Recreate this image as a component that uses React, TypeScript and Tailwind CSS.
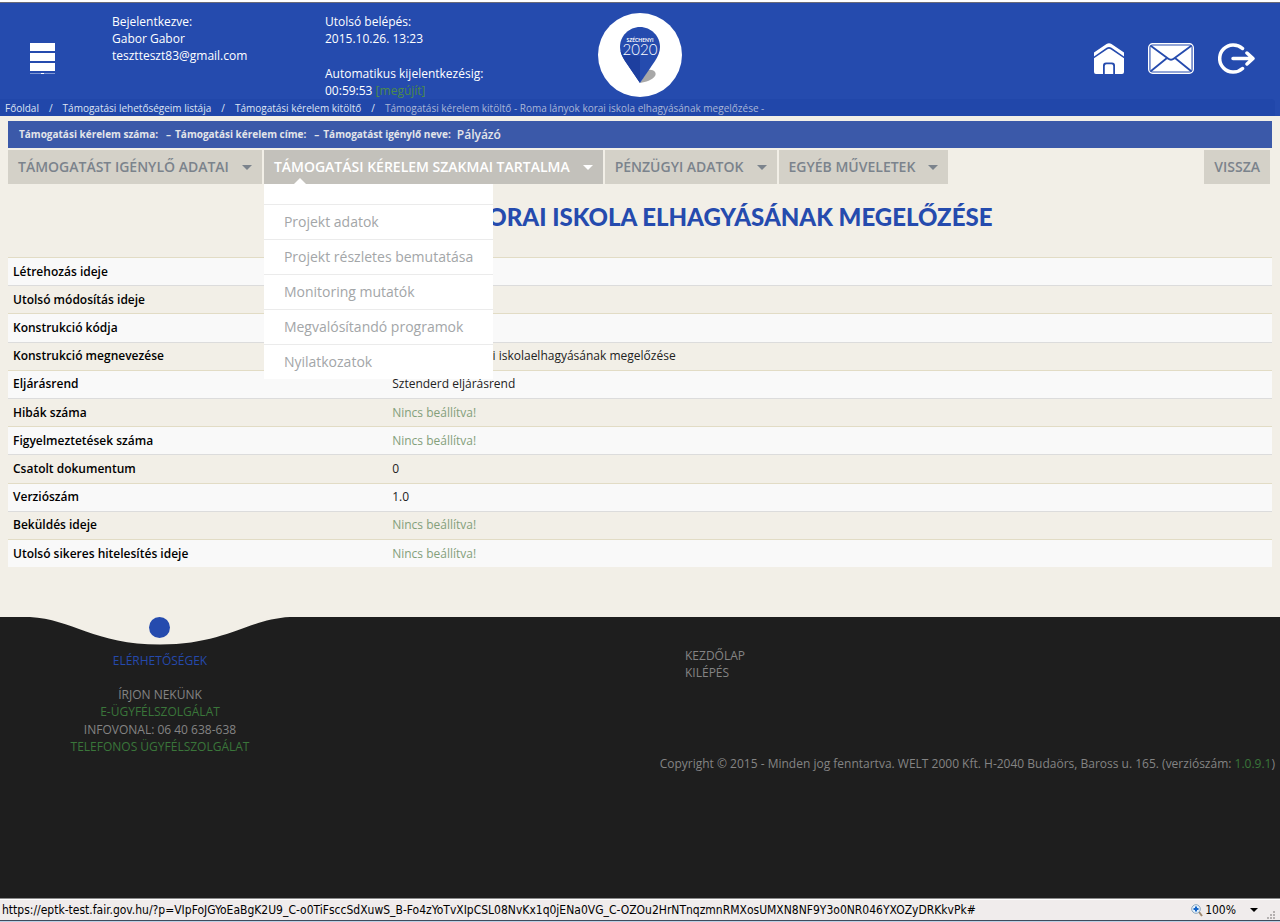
const breadcrumbs = [
  "Főoldal",
  "Támogatási lehetőségeim listája",
  "Támogatási kérelem kitöltő",
];

const submenu = [
  "Projekt adatok",
  "Projekt részletes bemutatása",
  "Monitoring mutatók",
  "Megvalósítandó programok",
  "Nyilatkozatok",
];

const EMPTY = "Nincs beállítva!";

const rows = [
  { label: "Létrehozás ideje", value: "" },
  { label: "Utolsó módosítás ideje", value: "" },
  { label: "Konstrukció kódja", value: "" },
  {
    label: "Konstrukció megnevezése",
    value: "Roma lányok korai iskolaelhagyásának megelőzése",
  },
  { label: "Eljárásrend", value: "Sztenderd eljárásrend" },
  { label: "Hibák száma", value: EMPTY },
  { label: "Figyelmeztetések száma", value: EMPTY },
  { label: "Csatolt dokumentum", value: "0" },
  { label: "Verziószám", value: "1.0" },
  { label: "Beküldés ideje", value: EMPTY },
  { label: "Utolsó sikeres hitelesítés ideje", value: EMPTY },
];

function Logo() {
  return (
    <svg viewBox="0 0 84 84" className="size-[84px]" role="img" aria-label="Széchenyi 2020">
      <circle cx="42" cy="42" r="42" fill="#fff" />
      <path d="M42 70L50 57C56 56 59 60 57 63C54 67 48 69 42 70Z" fill="#a8a8a8" />
      <path d="M42 14C53 14 62 23 62 34C62 39 60 43 57 48L42 70L27 48C24 43 22 39 22 34C22 23 31 14 42 14Z" fill="#254bae" />
      <path d="M42 43V70L27 48C25 45 23 41 22.500 38C28 42 35 43 42 43Z" fill="#1d3f9f" />
      <text x="42" y="29" textAnchor="middle" fill="#fff" className="font-['Lato'] text-[5px] leading-none font-bold">
        SZÉCHENYI
      </text>
      <text x="42" y="42" textAnchor="middle" fill="#fff" className="font-['Lato'] text-[15px] leading-none font-light">
        2020
      </text>
    </svg>
  );
}

function HomeIcon() {
  return (
    <svg viewBox="0 0 30 31" className="h-[31px] w-[30px]" aria-hidden="true">
      <path d="M0 9.500L12.500 1Q15 -0.500 17.500 1L30 9.500V13.500L17.500 4.800Q15 3.200 12.500 4.800L0 13.500Z" fill="#fff" />
      <path d="M0 15.300L13 6.500Q15 5.200 17 6.500L30 15.300V29Q30 31 28 31H21V22.500Q21 19.500 18 19.500H12Q9 19.500 9 22.500V31H2Q0 31 0 29Z" fill="#fff" />
      <path d="M10.800 31V23Q10.800 21.200 12.500 21.200H17.500Q19.200 21.200 19.200 23V31Z" fill="#fff" />
    </svg>
  );
}

function MailIcon() {
  return (
    <svg viewBox="0 0 46 31" className="h-[31px] w-[46px]" aria-hidden="true">
      <rect x="0.700" y="0.700" width="44.600" height="29.600" rx="4" fill="none" stroke="#fff" strokeWidth="1.400" />
      <rect x="2.500" y="2.500" width="41" height="26" rx="2" fill="#fff" />
      <path
        d="M3 3L20 15.500Q23 18 26 15.500L43 3M3 28L19 15M43 28L27 15"
        fill="none"
        stroke="#254bae"
        strokeWidth="1.800"
      />
    </svg>
  );
}

function LogoutIcon() {
  return (
    <svg viewBox="0 0 37 31" className="h-[31px] w-[37px]" aria-hidden="true">
      <g fill="none" stroke="#fff" strokeWidth="3.500" strokeLinecap="round" strokeLinejoin="round">
        <path d="M24.500 5.500A13.600 13.600 0 1 0 24.500 25.500" />
        <path d="M15 15.500H34M29 10L35 15.500L29 21" />
      </g>
    </svg>
  );
}

function Caret() {
  return <span className="border-x-5 border-t-5 border-x-transparent border-t-current" />;
}

function TopBar() {
  return (
    <header className="border-t border-[#6b6b78] bg-[#254bae] text-white">
      <div className="relative flex h-24 items-start pr-[25px] pl-[30px] text-xs leading-[17px]">
        <button type="button" aria-label="Menü" className="mt-10 flex w-[25px] flex-col items-center gap-0.5">
          <span className="h-2 w-full bg-white" />
          <span className="h-2 w-full bg-white" />
          <span className="h-2 w-full bg-white" />
          <span className="flex h-px w-full justify-center bg-[#7f97d4]">
            <span className="h-px w-[3px] bg-white" />
          </span>
        </button>
        <div className="mt-2.5 ml-[57px] w-[213px]">
          <p>Bejelentkezve:</p>
          <p>Gabor Gabor</p>
          <p>tesztteszt83@gmail.com</p>
        </div>
        <div className="mt-2.5">
          <p>Utolsó belépés:</p>
          <p>2015.10.26. 13:23</p>
          <p className="mt-[18px]">Automatikus kijelentkezésig:</p>
          <p>
            00:59:53{" "}
            <a href="#" className="text-[#4d8a4a]">
              [megújít]
            </a>
          </p>
        </div>
        <a href="#" className="absolute top-2.5 left-1/2 -translate-x-1/2">
          <Logo />
        </a>
        <div className="mt-10 ml-auto flex gap-x-6">
          <a href="#" aria-label="Kezdőlap">
            <HomeIcon />
          </a>
          <a href="#" aria-label="Üzenetek">
            <MailIcon />
          </a>
          <a href="#" aria-label="Kilépés">
            <LogoutIcon />
          </a>
        </div>
      </div>
      <nav className="mr-[5px] flex h-[17px] items-center rounded-tr bg-[#2147aa] pl-[5px] text-[10px] leading-4 text-[#dde3f2]">
        {breadcrumbs.map((item) => (
          <span key={item}>
            <a href="#">{item}</a>
            <span className="mx-2.5">/</span>
          </span>
        ))}
        <span className="text-[#a9b6d6]">
          Támogatási kérelem kitöltő - Roma lányok korai iskola elhagyásának megelőzése -
        </span>
      </nav>
    </header>
  );
}

function MainMenu() {
  const tab = "flex h-[34px] items-center gap-[13px] bg-[#d4d1c8] px-2.5 text-[#7b838c]";
  return (
    <nav className="mt-0.5 mr-0.5 flex gap-0.5 text-sm font-semibold">
      <button type="button" className={tab}>
        TÁMOGATÁST IGÉNYLŐ ADATAI <Caret />
      </button>
      <div className="relative">
        <button type="button" className="flex h-[34px] items-center gap-[13px] bg-[#c3c1bb] px-2.5 text-white">
          TÁMOGATÁSI KÉRELEM SZAKMAI TARTALMA <Caret />
        </button>
        <div className="absolute top-full left-0 z-10 w-[229px] bg-white pt-5 font-normal whitespace-nowrap text-[#a3a6a8]">
          <span className="absolute bottom-full left-[30px] border-x-6 border-b-6 border-x-transparent border-b-white" />
          <ul>
            {submenu.map((item) => (
              <li key={item} className="border-t border-[#ebebeb]">
                <a href="#" className="block px-5 leading-[34px]">
                  {item}
                </a>
              </li>
            ))}
          </ul>
        </div>
      </div>
      <button type="button" className={tab}>
        PÉNZÜGYI ADATOK <Caret />
      </button>
      <button type="button" className={tab}>
        EGYÉB MŰVELETEK <Caret />
      </button>
      <button type="button" className={tab + " ml-auto"}>
        VISSZA
      </button>
    </nav>
  );
}

function Details() {
  return (
    <table className="mt-[25px] h-[310px] w-full text-left text-xs">
      <tbody>
        {rows.map((row) => (
          <tr
            key={row.label}
            className="border-t border-[#dcdcdc] odd:border-[#e2dcc5] odd:bg-[#f9f9f9]"
          >
            <th scope="row" className="w-[30%] px-[5px] font-semibold text-black">
              {row.label}
            </th>
            <td className={row.value === EMPTY ? "px-[5px] text-[#84a07b]" : "px-[5px] text-[#222]"}>
              {row.value}
            </td>
          </tr>
        ))}
      </tbody>
    </table>
  );
}

function Footer() {
  return (
    <footer className="mt-[50px] flex grow bg-[#1e1e1e] text-xs leading-[17px] text-[#848484]">
      <div className="w-80">
        <svg viewBox="0 0 320 28" className="h-7 w-80" aria-hidden="true">
          <path d="M30 0C72 2 94 27.500 160 27.500C226 27.500 248 2 290 0Z" fill="#f2efe7" />
          <circle cx="159.500" cy="10.500" r="10.500" fill="#254bae" />
        </svg>
        <div className="mt-[7px] text-center">
          <h2 className="text-[#2549ac]">ELÉRHETŐSÉGEK</h2>
          <p className="mt-[17px]">ÍRJON NEKÜNK</p>
          <a href="#" className="block text-[#3a763a]">
            E-ÜGYFÉLSZOLGÁLAT
          </a>
          <p className="mt-px">INFOVONAL: 06 40 638-638</p>
          <a href="#" className="block text-[#3a763a]">
            TELEFONOS ÜGYFÉLSZOLGÁLAT
          </a>
        </div>
      </div>
      <div className="flex grow flex-col pt-[30px] pr-[5px]">
        <div className="flex flex-col pl-[365px]">
          <a href="#">KEZDŐLAP</a>
          <a href="#">KILÉPÉS</a>
        </div>
        <p className="mt-[74px] text-right">
          Copyright © 2015 - Minden jog fenntartva. WELT 2000 Kft. H-2040 Budaörs, Baross u. 165. (verziószám:{" "}
          <span className="text-[#3a763a]">1.0.9.1</span>)
        </p>
      </div>
    </footer>
  );
}

function StatusBar() {
  return (
    <div className="border-t border-[#8c8c8c] bg-[#f0ecec] font-['DejaVu_Sans_Condensed',sans-serif] text-xs text-black">
      <div className="flex h-[21px] items-center border-t border-white pr-1 pl-0.5">
        <span>
          https://eptk-test.fair.gov.hu/?p=VIpFoJGYoEaBgK2U9_C-o0TiFsccSdXuwS_B-Fo4zYoTvXIpCSL08NvKx1q0jENa0VG_C-OZOu2HrNTnqzmnRMXosUMXN8NF9Y3o0NR046YXOZyDRKkvPk#
        </span>
        <button type="button" className="ml-auto flex items-center gap-0.5">
          <svg viewBox="0 0 12 13" className="h-[13px] w-3" aria-hidden="true">
            <path d="M8 8L11 12" stroke="#a08a70" strokeWidth="2" />
            <circle cx="5" cy="5" r="4.300" fill="#e4f1fb" stroke="#8aa5bd" />
            <path d="M5 2.500V7.500M2.500 5H7.500" stroke="#1464c8" strokeWidth="2" />
          </svg>
          <span>100%</span>
          <span className="ml-3 border-x-4 border-t-4 border-x-transparent border-t-black" />
        </button>
        <svg viewBox="0 0 10 10" className="ml-2 size-2.5 self-end" fill="#b5b1b1" aria-hidden="true">
          <path d="M7 1h2v2h-2zM4 4h2v2h-2zM7 4h2v2h-2zM1 7h2v2h-2zM4 7h2v2h-2zM7 7h2v2h-2z" />
        </svg>
      </div>
      <div className="h-0.5 border-t border-[#3f4a5c] bg-[#b9cfe4]" />
    </div>
  );
}

export default function App() {
  return (
    <div className="flex min-h-screen flex-col bg-[#f2efe7] font-['Open_Sans',sans-serif]">
      <div className="h-0.5 bg-white" />
      <TopBar />
      <main className="px-2 pt-[5px]">
        <div className="flex h-[27px] items-center bg-[#3b59a9] px-[11px] text-[10px] font-bold text-[#e3e5ea]">
          <span>Támogatási kérelem száma:</span>
          <span className="mr-1 ml-2">–</span>
          <span>Támogatási kérelem címe:</span>
          <span className="mr-1 ml-2">–</span>
          <span>Támogatást igénylő neve:</span>
          <span className="ml-1.5 text-xs font-semibold">Pályázó</span>
        </div>
        <MainMenu />
        <h1 className="mt-[18px] text-center font-['Lato',sans-serif] text-2xl leading-[30px] font-black text-[#254bae]">
          ROMA LÁNYOK KORAI ISKOLA ELHAGYÁSÁNAK MEGELŐZÉSE
        </h1>
        <Details />
      </main>
      <Footer />
      <StatusBar />
    </div>
  );
}
